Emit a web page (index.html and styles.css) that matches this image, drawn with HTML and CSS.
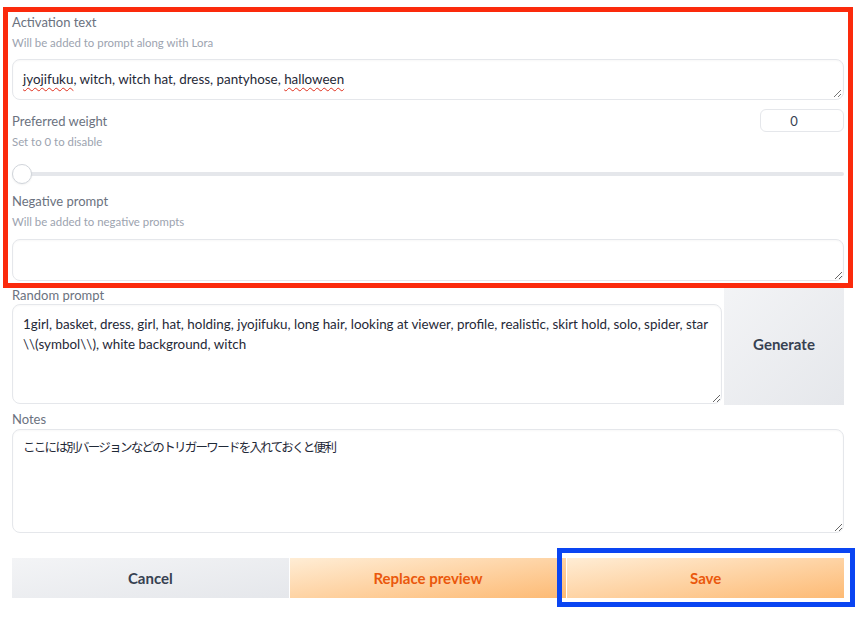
FILE: index.html
```html
<!DOCTYPE html>
<html lang="ja">
<head>
    <meta charset="UTF-8">
    <meta name="viewport" content="width=device-width, initial-scale=1.0">
    <title>Lora metadata editor</title>
    <link rel="stylesheet" href="styles.css">
</head>
<body>
    <div class="editor">
        <div class="block first">
            <label class="field-label">Activation text</label>
            <div class="field-info">Will be added to prompt along with Lora</div>
            <div class="textbox short">
                <span class="typo">jyojifuku</span>, witch, witch hat, dress, pantyhose, <span class="typo">halloween</span>
                <svg class="grip" width="9" height="9" viewBox="0 0 9 9"><path d="M8 1L1 8M8 5L5 8" stroke="#777" stroke-width="1"/></svg>
            </div>
        </div>

        <div class="block weight">
            <div class="weight-row">
                <label class="field-label">Preferred weight</label>
                <input class="number" type="number" value="0">
            </div>
            <div class="field-info">Set to 0 to disable</div>
            <div class="slider">
                <div class="track"></div>
                <div class="thumb"></div>
            </div>
        </div>

        <div class="block negative">
            <label class="field-label">Negative prompt</label>
            <div class="field-info">Will be added to negative prompts</div>
            <textarea class="area short" rows="1"></textarea>
        </div>

        <div class="random-row">
            <div class="random-col">
                <label class="field-label tight">Random prompt</label>
                <textarea class="area random">1girl, basket, dress, girl, hat, holding, jyojifuku, long hair, looking at viewer, profile, realistic, skirt hold, solo, spider, star \\(symbol\\), white background, witch</textarea>
            </div>
            <button class="btn secondary generate">Generate</button>
        </div>

        <div class="block notes">
            <label class="field-label tight">Notes</label>
            <textarea class="area notes-area">ここには別バージョンなどのトリガーワードを入れておくと便利</textarea>
        </div>

        <div class="actions">
            <button class="btn secondary">Cancel</button>
            <button class="btn primary">Replace preview</button>
            <button class="btn primary">Save</button>
        </div>
    </div>

    <div class="mark red"></div>
    <div class="mark blue"></div>
</body>
</html>
```

FILE: styles.css
```css
body {
    margin: 0;
    background: #fff;
    font-family: Lato, "Noto Sans CJK JP", sans-serif;
    color: #374151;
}
.editor {
    width: 832px;
    margin-left: 12px;
    padding-top: 12px;
}
.field-label {
    display: block;
    font-size: 13px;
    line-height: 20px;
    color: #6b7280;
}
.field-label.tight {
    line-height: 18px;
}
.field-info {
    font-size: 11.4px;
    line-height: 16px;
    color: #9ca3af;
    margin-top: 3px;
}
.textbox, .area {
    display: block;
    box-sizing: border-box;
    width: 100%;
    border: 1px solid #e5e7eb;
    border-radius: 8px;
    padding: 9px 10px;
    font-family: Lato, "Noto Sans CJK JP", sans-serif;
    font-size: 13.4px;
    line-height: 20px;
    color: #1f2937;
    background: #fff;
    box-shadow: inset 0 1px 2px rgba(0, 0, 0, 0.03);
    resize: vertical;
    outline: none;
}
.textbox {
    position: relative;
    margin-top: 8px;
    height: 41px;
}
.typo {
    text-decoration: underline wavy #e0301e;
    text-decoration-thickness: 1px;
    text-underline-offset: 3px;
}
.grip {
    position: absolute;
    right: 1px;
    bottom: 1px;
}
.weight {
    margin-top: 9px;
}
.weight-row {
    display: flex;
    justify-content: space-between;
    align-items: center;
    height: 23px;
}
.number {
    box-sizing: border-box;
    width: 84px;
    height: 23px;
    padding: 0 16px 0 0;
    border: 1px solid #e5e7eb;
    border-radius: 6px;
    text-align: center;
    font-family: Lato, sans-serif;
    font-size: 13px;
    color: #374151;
    -moz-appearance: textfield;
}
.number::-webkit-inner-spin-button,
.number::-webkit-outer-spin-button {
    -webkit-appearance: none;
    margin: 0;
}
.weight .field-info {
    margin-top: 2px;
}
.slider {
    position: relative;
    height: 20px;
    margin-top: 14px;
}
.track {
    position: absolute;
    left: 0;
    right: 0;
    top: 8px;
    height: 4px;
    border-radius: 2px;
    background: #e5e7eb;
}
.thumb {
    position: absolute;
    left: 0;
    top: 0;
    box-sizing: border-box;
    width: 20px;
    height: 20px;
    border-radius: 50%;
    background: #fff;
    border: 1px solid #d1d5db;
    box-shadow: 0 1px 2px rgba(0, 0, 0, 0.06);
}
.negative {
    margin-top: 7px;
}
.negative .area {
    margin-top: 9px;
    height: 42px;
}
.random-row {
    display: flex;
    gap: 2px;
    margin-top: 2px;
    height: 122px;
}
.random-col {
    flex: 1;
    padding-top: 3px;
}
.area.random {
    height: 100px;
}
.generate {
    width: 120px;
}
.notes {
    margin-top: 5px;
}
.notes-area {
    margin-top: 1px;
    height: 104px;
    padding-top: 8px;
    font-size: 12.5px;
    letter-spacing: -1.7px;
}
.btn {
    border: none;
    font-family: Lato, sans-serif;
    font-weight: bold;
    font-size: 15px;
    cursor: pointer;
}
.secondary {
    background: linear-gradient(to bottom right, #f3f4f6, #e5e7eb);
    color: #374151;
}
.primary {
    background: linear-gradient(to bottom right, #ffedd5, #fdba74);
    color: #ea580c;
}
.actions {
    display: grid;
    grid-template-columns: 1fr 1fr 1fr;
    gap: 1px;
    margin-top: 25px;
}
.actions .btn {
    height: 40px;
}
.mark {
    position: absolute;
    box-sizing: border-box;
    pointer-events: none;
}
.mark.red {
    left: 3px;
    top: 7px;
    width: 850px;
    height: 281px;
    border: 5px solid #fb2a0c;
}
.mark.blue {
    left: 557px;
    top: 548px;
    width: 298px;
    height: 59px;
    border: 5px solid #0a45f2;
}
```
